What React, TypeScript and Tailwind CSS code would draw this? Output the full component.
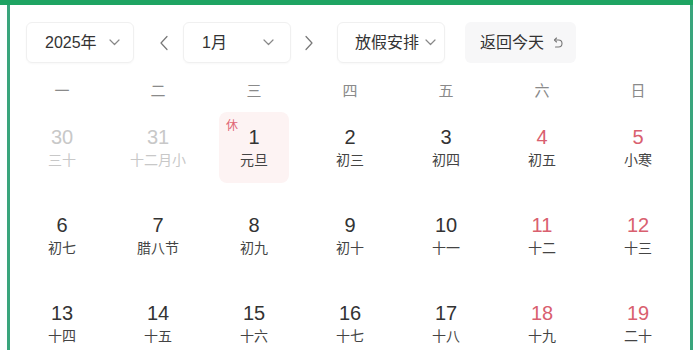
import React from "react";

type Day = { d: number; l: string; grey?: boolean; red?: boolean; rest?: boolean };

const rows: Day[][] = [
  [
    { d: 30, l: "三十", grey: true },
    { d: 31, l: "十二月小", grey: true },
    { d: 1, l: "元旦", rest: true },
    { d: 2, l: "初三" },
    { d: 3, l: "初四" },
    { d: 4, l: "初五", red: true },
    { d: 5, l: "小寒", red: true },
  ],
  [
    { d: 6, l: "初七" },
    { d: 7, l: "腊八节" },
    { d: 8, l: "初九" },
    { d: 9, l: "初十" },
    { d: 10, l: "十一" },
    { d: 11, l: "十二", red: true },
    { d: 12, l: "十三", red: true },
  ],
  [
    { d: 13, l: "十四" },
    { d: 14, l: "十五" },
    { d: 15, l: "十六" },
    { d: 16, l: "十七" },
    { d: 17, l: "十八" },
    { d: 18, l: "十九", red: true },
    { d: 19, l: "二十", red: true },
  ],
];

const weekdays = ["一", "二", "三", "四", "五", "六", "日"];

function ChevronDown() {
  return (
    <svg width="11" height="7" viewBox="0 0 11 7" fill="none">
      <path d="M1 1l4.5 4.5L10 1" stroke="#888" strokeWidth="1.2" strokeLinecap="round" strokeLinejoin="round" />
    </svg>
  );
}

function ChevronSide({ dir }: { dir: "left" | "right" }) {
  return (
    <svg width="10" height="16" viewBox="0 0 10 16" fill="none">
      {dir === "left" ? (
        <path d="M8 1.5L2 8l6 6.5" stroke="#777" strokeWidth="1.2" strokeLinecap="round" strokeLinejoin="round" />
      ) : (
        <path d="M2 1.5L8 8l-6 6.5" stroke="#777" strokeWidth="1.2" strokeLinecap="round" strokeLinejoin="round" />
      )}
    </svg>
  );
}

function BackIcon() {
  return (
    <svg width="11" height="12" viewBox="0 0 11 12" fill="none">
      <path d="M3.5 1L1.5 3l2 2" stroke="#777" strokeWidth="1.1" strokeLinecap="round" strokeLinejoin="round" />
      <path d="M1.8 3H5.5a3.5 3.5 0 0 1 0 7H2.5" stroke="#777" strokeWidth="1.1" strokeLinecap="round" />
    </svg>
  );
}

export default function App() {
  return (
    <div className="w-[700px] h-[350px] bg-white overflow-hidden font-['Liberation_Sans','Noto_Sans_CJK_SC',sans-serif]">
      <div className="w-[693px] h-[5px] bg-[#1fa463]" />
      <div className="ml-[7px] w-[686px] h-[360px] border-x-[3px] border-[#3aa57c]">
        {/* controls */}
        <div className="flex items-center pt-[17px] pl-[16px]">
          <div className="w-[108px] h-[41px] rounded-[6px] border border-[#f0f0f0] shadow-[0_1px_2px_rgba(0,0,0,0.03)] flex items-center justify-between pl-[18px] pr-[13px] text-[16px] text-[#333]">
            <span>2025年</span>
            <ChevronDown />
          </div>
          <div className="ml-[25px] mr-[14px] flex items-center">
            <ChevronSide dir="left" />
          </div>
          <div className="w-[108px] h-[41px] rounded-[6px] border border-[#f0f0f0] shadow-[0_1px_2px_rgba(0,0,0,0.03)] flex items-center justify-between pl-[18px] pr-[16px] text-[16px] text-[#333]">
            <span>1月</span>
            <ChevronDown />
          </div>
          <div className="ml-[13px] mr-[23px] flex items-center">
            <ChevronSide dir="right" />
          </div>
          <div className="w-[108px] h-[41px] rounded-[6px] border border-[#f0f0f0] shadow-[0_1px_2px_rgba(0,0,0,0.03)] flex items-center pl-[17px] text-[16px] text-[#333]">
            <span>放假安排</span>
            <span className="ml-[6px] flex items-center">
              <ChevronDown />
            </span>
          </div>
          <div className="ml-[20px] w-[111px] h-[41px] rounded-[6px] bg-[#f7f7f8] flex items-center pl-[15px] text-[16px] text-[#333]">
            <span>返回今天</span>
            <span className="ml-[9px] flex items-center">
              <BackIcon />
            </span>
          </div>
        </div>

        {/* weekdays */}
        <div className="mt-[13px] h-[30px] grid grid-cols-7 px-[4px]">
          {weekdays.map((w) => (
            <div key={w} className="flex items-center justify-center text-[15px] text-[#8a8a8a]">
              {w}
            </div>
          ))}
        </div>

        {/* days */}
        <div className="px-[4px]">
          {rows.map((row, i) => (
            <div key={i} className="grid grid-cols-7 h-[88px]">
              {row.map((c) => (
                <div key={c.d} className="flex justify-center">
                  <div
                    className={
                      "relative mt-[6px] w-[70px] h-[71px] rounded-[8px] flex flex-col items-center pt-[12px] " +
                      (c.rest ? "bg-[#fdf3f3]" : "")
                    }
                  >
                    {c.rest && (
                      <span className="absolute left-[7px] top-[7px] text-[12px] leading-[14px] text-[#e06673]">休</span>
                    )}
                    <span
                      className={
                        "text-[20px] leading-[26px] " +
                        (c.grey ? "text-[#c8c8c8]" : c.red ? "text-[#d9606f]" : "text-[#333]")
                      }
                    >
                      {c.d}
                    </span>
                    <span
                      className={
                        "text-[14px] leading-[20px] whitespace-nowrap " + (c.grey ? "text-[#c8c8c8]" : "text-[#444]")
                      }
                    >
                      {c.l}
                    </span>
                  </div>
                </div>
              ))}
            </div>
          ))}
        </div>
      </div>
    </div>
  );
}
